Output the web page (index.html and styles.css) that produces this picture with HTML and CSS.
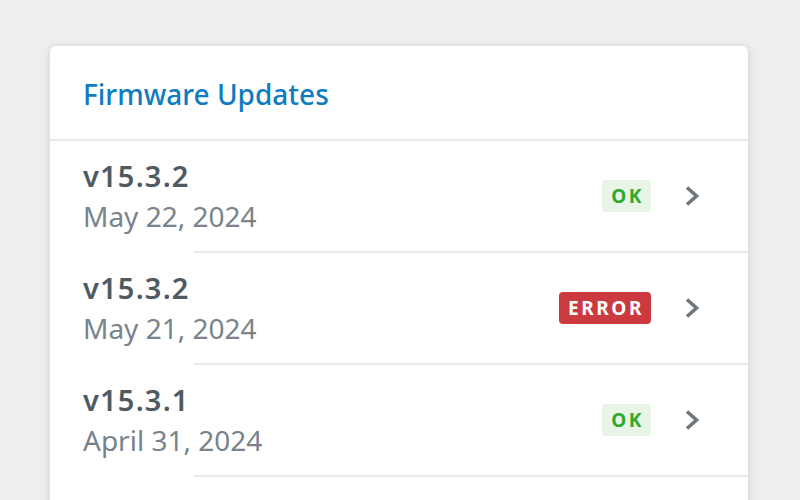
FILE: index.html
```html
<!DOCTYPE html>
<html lang="en">
<head>
<meta charset="utf-8">
<title>Firmware Updates</title>
<link rel="stylesheet" href="styles.css">
</head>
<body>
<main class="card">
  <header class="card-header">
    <h1 class="card-title">Firmware Updates</h1>
  </header>
  <ul class="list">
    <li class="row">
      <div class="info">
        <div class="version">v15.3.2</div>
        <div class="date">May 22, 2024</div>
      </div>
      <span class="badge badge-ok">OK</span>
      <svg class="chevron" viewBox="0 0 16 24" width="16" height="24" aria-hidden="true"><path d="M3 3.5 L12.5 12 L3 20.5" fill="none" stroke="currentColor" stroke-width="3.6"/></svg>
    </li>
    <li class="sep"></li>
    <li class="row">
      <div class="info">
        <div class="version">v15.3.2</div>
        <div class="date">May 21, 2024</div>
      </div>
      <span class="badge badge-error">ERROR</span>
      <svg class="chevron" viewBox="0 0 16 24" width="16" height="24" aria-hidden="true"><path d="M3 3.5 L12.5 12 L3 20.5" fill="none" stroke="currentColor" stroke-width="3.6"/></svg>
    </li>
    <li class="sep"></li>
    <li class="row">
      <div class="info">
        <div class="version">v15.3.1</div>
        <div class="date">April 31, 2024</div>
      </div>
      <span class="badge badge-ok">OK</span>
      <svg class="chevron" viewBox="0 0 16 24" width="16" height="24" aria-hidden="true"><path d="M3 3.5 L12.5 12 L3 20.5" fill="none" stroke="currentColor" stroke-width="3.6"/></svg>
    </li>
    <li class="sep"></li>
    <li class="row row-empty"></li>
  </ul>
</main>
</body>
</html>
```
FILE: styles.css
```css
html, body {
  margin: 0;
  padding: 0;
  height: 100%;
  overflow: hidden;
}
body {
  background: #edeeee;
  font-family: "Noto Sans", "Open Sans", sans-serif;
  padding-top: 46px;
  box-sizing: border-box;
}
.card {
  margin-left: 50px;
  width: 698px;
  background: #ffffff;
  border-radius: 6px;
  box-shadow: 0 1px 10px rgba(0, 0, 0, 0.13);
}
.card-header {
  height: 93px;
  border-bottom: 2px solid #e6e8e9;
  display: flex;
  align-items: center;
  padding-left: 33px;
}
.card-title {
  margin: 2px 0 0;
  font-size: 28px;
  font-weight: 500;
  color: #0f7bc0;
}
.list {
  list-style: none;
  margin: 0;
  padding: 0;
}
.row {
  height: 110px;
  display: flex;
  align-items: center;
  padding: 0 48px 0 33px;
}
.sep {
  height: 2px;
  margin-left: 144px;
  background: #e6e8e9;
}
.info {
  flex: 1;
  display: flex;
  flex-direction: column;
}
.version {
  font-size: 29px;
  font-weight: 600;
  line-height: 40px;
  letter-spacing: 1.2px;
  color: #4e5962;
}
.date {
  font-size: 28px;
  font-weight: 400;
  line-height: 40px;
  color: #78838b;
}
.badge {
  height: 32px;
  display: inline-flex;
  align-items: center;
  padding: 0 7px 0 9px;
  border-radius: 4px;
  font-size: 19px;
  font-weight: 700;
  letter-spacing: 2.6px;
}
.badge-ok {
  background: #e7f4e6;
  color: #2fa82c;
}
.badge-error {
  background: #cc3a3f;
  color: #ffffff;
}
.chevron {
  margin-left: 33px;
  color: #6e777d;
  display: block;
}
```
